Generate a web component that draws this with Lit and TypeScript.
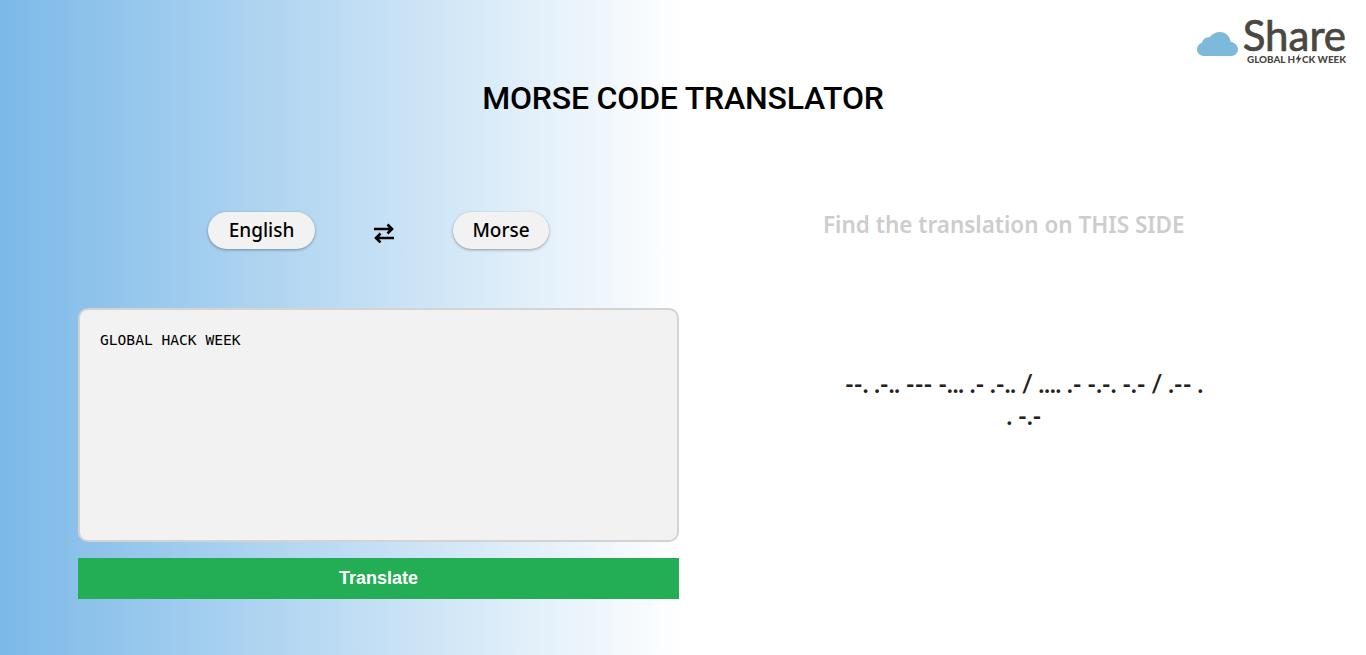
import { LitElement, html, css } from 'lit';
import { customElement } from 'lit/decorators.js';

@customElement('app-root')
export class AppRoot extends LitElement {
  static styles = css`
    :host {
      display: block;
      position: relative;
      height: 655px;
      overflow: hidden;
      background: linear-gradient(to right, #7cb9e8, #ffffff 50%);
      font-family: 'Noto Sans', 'Lato', sans-serif;
      color: #000;
    }

    .logo {
      position: absolute;
      top: 17px;
      right: 20px;
      width: 149px;
      height: 50px;
      display: flex;
      gap: 4px;
    }

    .logo svg.cloud {
      width: 41px;
      height: 24px;
      margin-top: 15px;
      flex: none;
    }

    .logo-text {
      flex: 1;
      display: flex;
      flex-direction: column;
      align-items: flex-end;
      color: #4a4640;
      font-family: 'Lato', sans-serif;
    }

    .logo-share {
      font-size: 42px;
      line-height: 37px;
      -webkit-text-stroke: 0.7px #4a4640;
    }

    .logo-week {
      display: flex;
      align-items: center;
      font-size: 9.8px;
      line-height: 10px;
      font-weight: 900;
      white-space: nowrap;
    }

    .logo-week svg {
      width: 7px;
      height: 10px;
    }

    h1 {
      margin: 0;
      padding-top: 79px;
      height: 133px;
      text-align: center;
      font-family: Roboto, sans-serif;
      font-size: 32px;
      line-height: 38px;
      font-weight: 500;
      letter-spacing: -0.2px;
    }

    .columns {
      display: grid;
      grid-template-columns: 601px 1fr;
      padding-left: 78px;
      column-gap: 112px;
    }

    .switcher {
      height: 37px;
      margin: 0 0 59px;
      padding-left: 130px;
      display: flex;
      align-items: center;
    }

    .pill {
      height: 37px;
      padding-bottom: 2px;
      display: flex;
      align-items: center;
      justify-content: center;
      box-sizing: border-box;
      border-radius: 19px;
      background: #f2f2f2;
      box-shadow: 0 1px 3px rgba(0, 0, 0, 0.35);
      font-size: 19px;
      font-weight: 500;
    }

    .pill.en {
      width: 107px;
    }

    .pill.mo {
      width: 96px;
    }

    .swap {
      width: 138px;
      display: flex;
      justify-content: center;
    }

    .swap svg {
      width: 20px;
      height: 20px;
      margin-top: 5px;
    }

    .input {
      width: 601px;
      height: 234px;
      box-sizing: border-box;
      padding: 21px 20px;
      display: block;
      background: #f2f2f2;
      border: 2px solid #d3d3d3;
      border-radius: 10px;
      font-family: 'DejaVu Sans Mono', monospace;
      font-size: 14.6px;
      line-height: 17px;
      color: #000;
      resize: none;
      outline: none;
      margin: 0;
    }

    .translate {
      display: block;
      width: 601px;
      height: 41px;
      margin-top: 16px;
      border: none;
      background: #23ad54;
      color: #fff;
      font-family: 'Liberation Sans', sans-serif;
      font-size: 18px;
      font-weight: 700;
    }

    .hint {
      width: 361px;
      margin: -2px 0 0 32px;
      font-size: 22.5px;
      line-height: 30px;
      font-weight: 600;
      text-align: center;
      white-space: nowrap;
      color: #cdcdcd;
    }

    .result {
      width: 365px;
      margin: 128px 0 0 50.5px;
      font-family: 'Lato', sans-serif;
      font-size: 23.8px;
      line-height: 32px;
      font-weight: 700;
      text-align: center;
      color: #222;
    }
  `;

  render() {
    return html`
      <div class="logo">
        <svg class="cloud" viewBox="0 0 41 24" aria-hidden="true">
          <path
            fill="#7db9da"
            d="M7 24C3 24 0 21 0 17.5C0 14 2.5 11.5 5 10.8C5.5 7.5 8.5 5 12.5 5.2C15 2 19 0 23 0C28.5 0 33 4 33.5 9.8C37.5 10.5 41 13.5 41 17.5C41 21 38 24 34 24Z"
          />
        </svg>
        <div class="logo-text">
          <span class="logo-share">Share</span>
          <span class="logo-week"
            >GLOBAL H<svg viewBox="0 0 7 10" aria-hidden="true">
              <path fill="#4a4640" d="M4.5 0L0.5 5.6H3L2.2 10L6.5 3.8H3.9Z" /></svg
            >CK WEEK</span
          >
        </div>
      </div>
      <h1>MORSE CODE TRANSLATOR</h1>
      <div class="columns">
        <section>
          <div class="switcher">
            <div class="pill en">English</div>
            <div class="swap">
              <svg viewBox="0 0 20 20" aria-hidden="true">
                <path
                  fill="none"
                  stroke="#000"
                  stroke-width="2.6"
                  d="M0 6H18M13.5 1.5L18 6L13.5 10.5M20 15H2M6.5 10.5L2 15L6.5 19.5"
                />
              </svg>
            </div>
            <div class="pill mo">Morse</div>
          </div>
          <textarea class="input" .value=${'GLOBAL HACK WEEK'}></textarea>
          <button class="translate">Translate</button>
        </section>
        <section>
          <div class="hint">Find the translation on THIS SIDE</div>
          <div class="result">--. .-.. --- -... .- .-.. / .... .- -.-. -.- / .-- . . -.-</div>
        </section>
      </div>
    `;
  }
}
